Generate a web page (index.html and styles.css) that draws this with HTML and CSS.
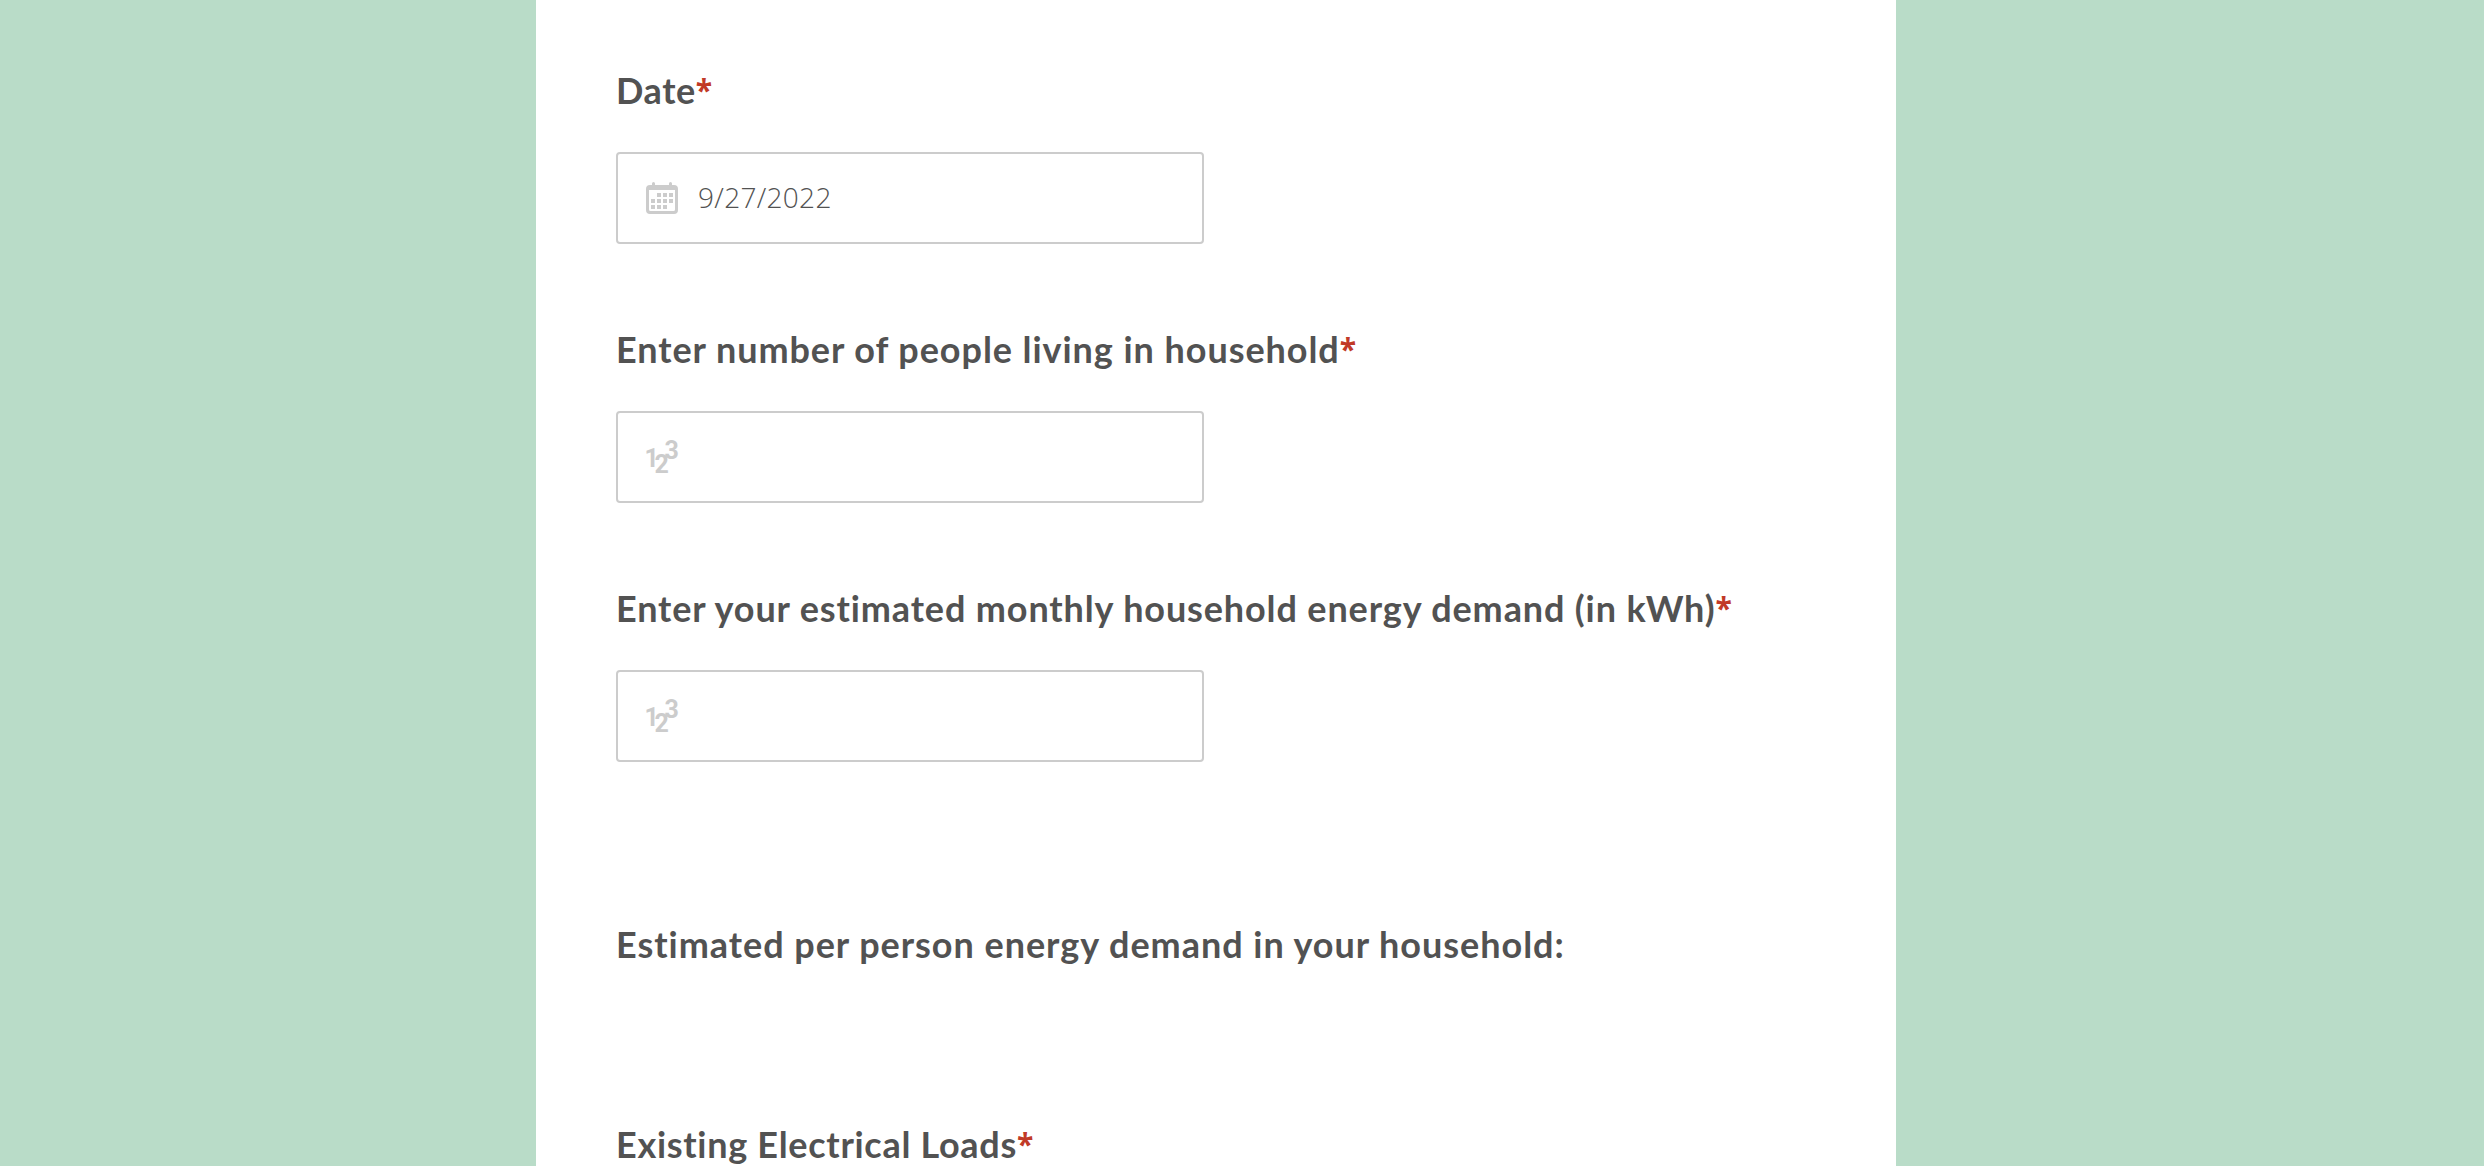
FILE: index.html
```
<!DOCTYPE html>
<html lang="en">
<head>
<meta charset="utf-8">
<title>Household Energy Form</title>
<link rel="stylesheet" href="styles.css">
</head>
<body>
<form class="form">
  <div class="field">
    <label class="label label-date" for="date">Date<span class="required">*</span></label>
    <div class="input-box">
      <svg class="icon" viewBox="0 0 32 32" aria-hidden="true">
        <path fill-rule="evenodd" d="M4 3h24a4 4 0 0 1 4 4v21a4 4 0 0 1-4 4H4a4 4 0 0 1-4-4V7a4 4 0 0 1 4-4zM3 8v19.500a1.500 1.500 0 0 0 1.500 1.500h23a1.500 1.500 0 0 0 1.500-1.500V8z"/>
        <path d="M6 4V1.500a1.500 1.500 0 0 1 3 0V4zM23 4V1.500a1.500 1.500 0 0 1 3 0V4z"/>
        <path d="M11 11h4v4h-4zM17 11h4v4h-4zM23 11h4v4h-4zM5 17h4v4H5zM11 17h4v4h-4zM17 17h4v4h-4zM23 17h4v4h-4zM5 23h4v4H5zM11 23h4v4h-4zM17 23h4v4h-4z"/>
      </svg>
      <input class="input" id="date" type="text" value="9/27/2022">
    </div>
  </div>
  <div class="field">
    <label class="label label-people" for="people">Enter number of people living in household<span class="required">*</span></label>
    <div class="input-box">
      <svg class="icon" viewBox="0 0 32 32" aria-hidden="true">
        <text class="digit" x="-1.500" y="26">1</text>
        <text class="digit" x="8.500" y="32">2</text>
        <text class="digit" x="18.500" y="18">3</text>
      </svg>
      <input class="input" id="people" type="text">
    </div>
  </div>
  <div class="field">
    <label class="label label-demand" for="demand">Enter your estimated monthly household energy demand (in kWh)<span class="required">*</span></label>
    <div class="input-box">
      <svg class="icon" viewBox="0 0 32 32" aria-hidden="true">
        <text class="digit" x="-1.500" y="26">1</text>
        <text class="digit" x="8.500" y="32">2</text>
        <text class="digit" x="18.500" y="18">3</text>
      </svg>
      <input class="input" id="demand" type="text">
    </div>
  </div>
  <div class="result label label-result">Estimated per person energy demand in your household:</div>
  <div class="label label-loads">Existing Electrical Loads<span class="required">*</span></div>
</form>
</body>
</html>
```
FILE: styles.css
```
* {
  box-sizing: border-box;
}

html,
body {
  height: 100%;
  margin: 0;
  overflow: hidden;
}

body {
  background: #b9dcc8;
  color: #525252;
  font-family: Lato, "Open Sans", sans-serif;
}

.form {
  width: 1360px;
  height: 100%;
  margin-left: 536px;
  padding: 68px 80px 0;
  overflow: hidden;
  background: #fff;
}

.field {
  margin-bottom: 83px;
}

.label {
  display: block;
  font-size: 36px;
  font-weight: 700;
  line-height: 44px;
  white-space: nowrap;
}

.label-date {
  letter-spacing: 0.6px;
}

.label-people {
  letter-spacing: 0.94px;
}

.label-demand {
  letter-spacing: 0.87px;
}

.label-result {
  letter-spacing: 0.96px;
}

.label-loads {
  letter-spacing: 0.7px;
}

.required {
  position: relative;
  top: -3px;
  color: #c13a27;
  font-family: "Open Sans", sans-serif;
  font-size: 30px;
  font-weight: 700;
  line-height: 0;
}

.input-box {
  display: flex;
  align-items: center;
  gap: 20px;
  width: 588px;
  height: 92px;
  margin-top: 40px;
  padding: 0 28px;
  border: 2px solid #ccc;
  border-radius: 4px;
}

.icon {
  flex: none;
  width: 32px;
  height: 32px;
  overflow: visible;
  fill: #ccc;
}

.digit {
  font-family: Roboto, sans-serif;
  font-size: 25px;
  font-weight: 700;
}

.input {
  flex: 1;
  min-width: 0;
  padding: 0 0 2px;
  border: 0;
  outline: 0;
  background: transparent;
  color: #525252;
  font: 300 28px/40px "Open Sans", sans-serif;
  letter-spacing: 0.3px;
}

.result {
  margin: 160px 0 156px;
}
```
